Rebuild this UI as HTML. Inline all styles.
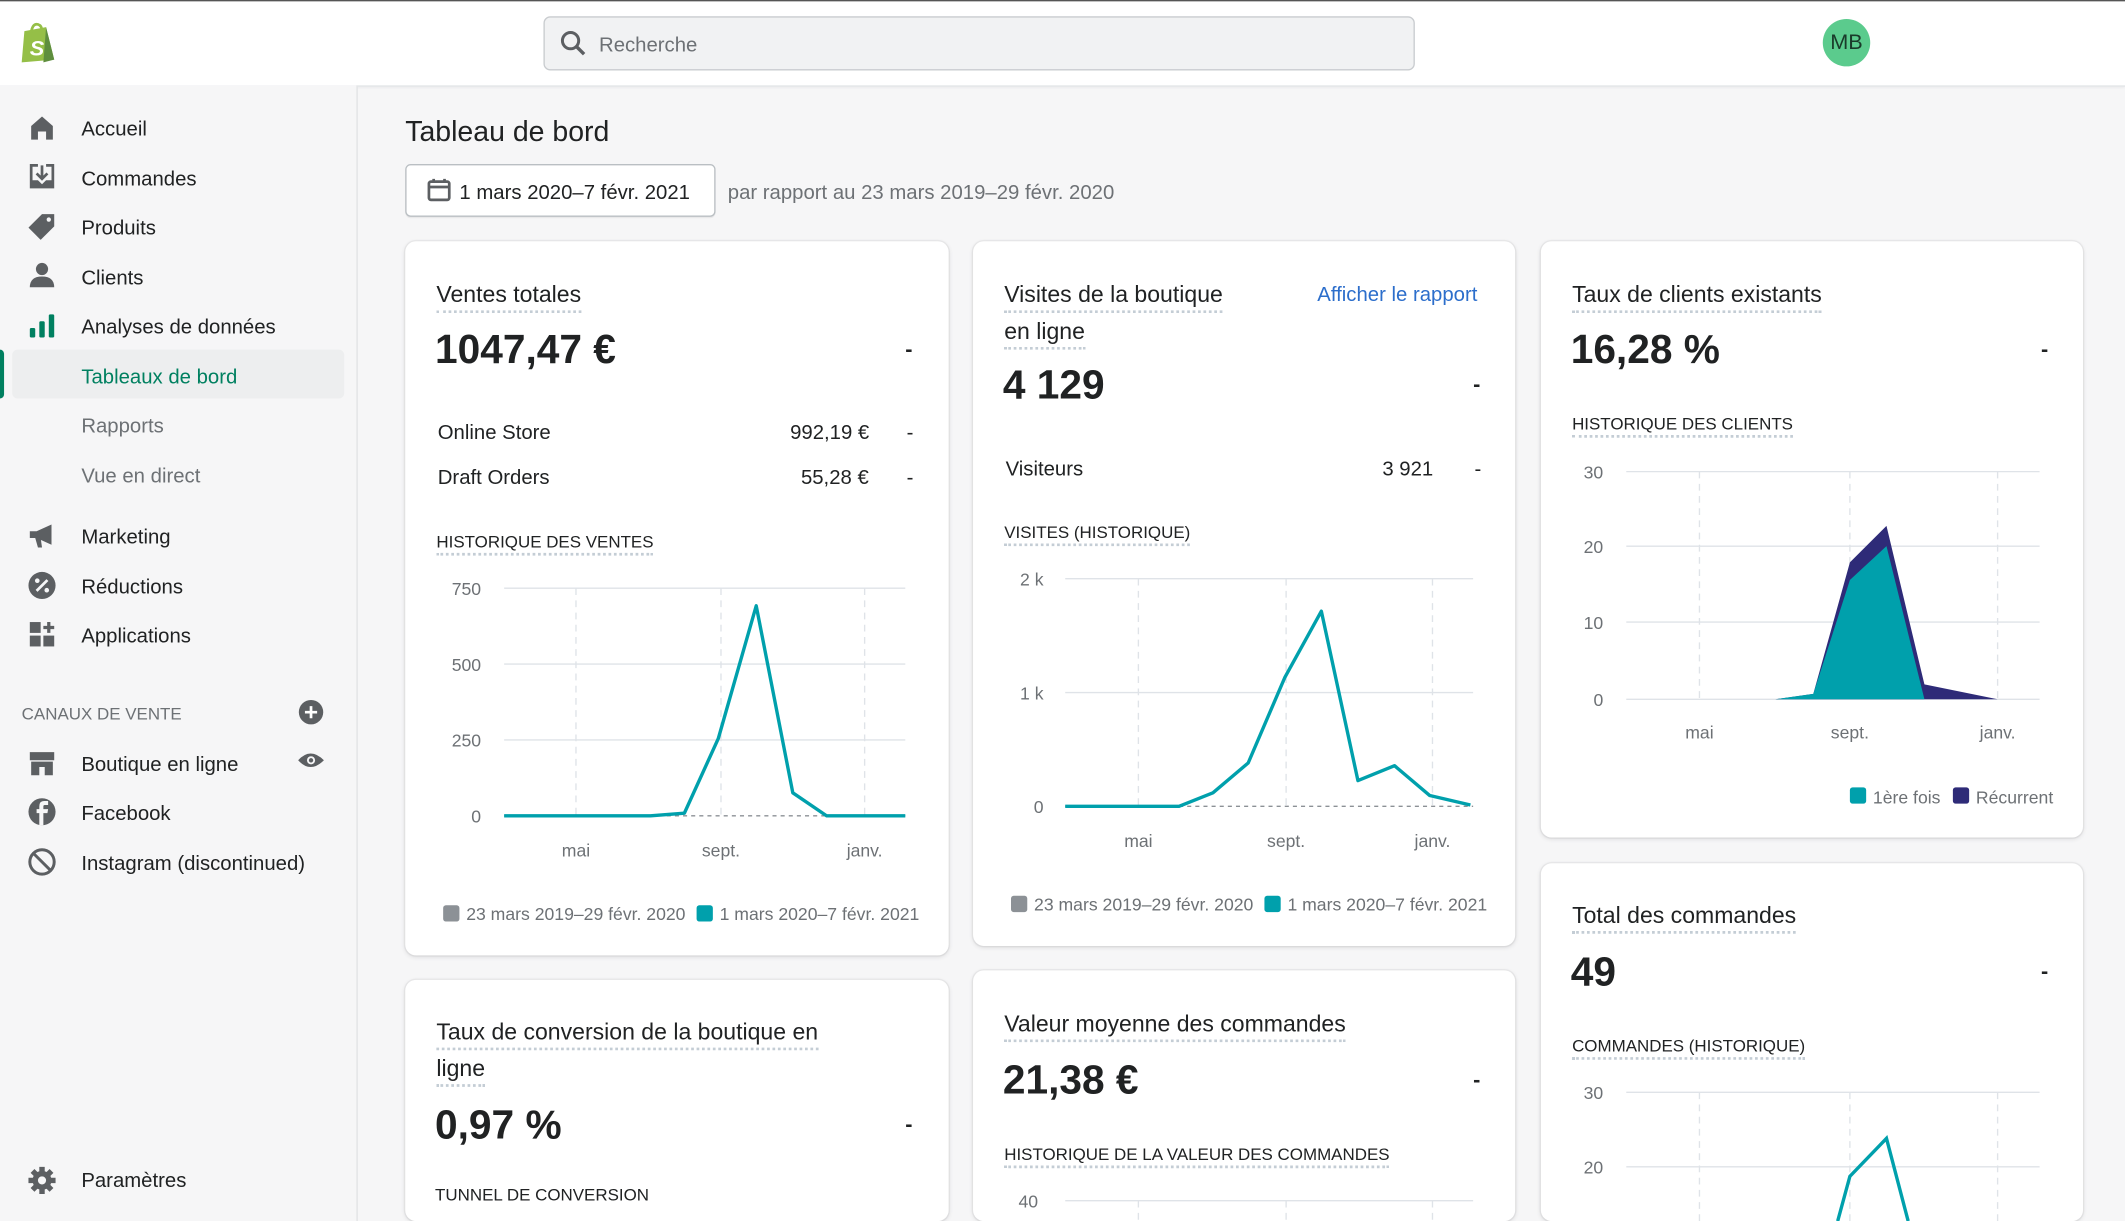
<!DOCTYPE html>
<html><head><meta charset="utf-8"><style>
html,body{margin:0;padding:0;width:2125px;height:1221px;overflow:hidden;background:#f6f6f7}
#w{position:absolute;left:0;top:0;width:1568px;height:901px;transform:scale(1.35523);transform-origin:0 0;background:#f6f6f7;font-family:"Liberation Sans",sans-serif;color:#202223;overflow:hidden}
.a{position:absolute;white-space:nowrap}
.nav,.sub,.ct,.big,.row,.dash,.cap,.t2{margin-top:2px}
.top{position:absolute;left:0;top:0;width:1568px;height:62px;background:#fff;border-top:1px solid #555;border-bottom:1px solid #e1e3e5;box-shadow:0 1px 2px rgba(0,0,0,.06)}
.side{position:absolute;left:0;top:63px;width:263px;height:838px;border-right:1px solid #e1e3e5;background:#f6f6f7}
.nav{font-size:15px;color:#202223}
.sub{font-size:15px;color:#6d7175}
.card{position:absolute;background:#fff;border-radius:8px;box-shadow:0 0 0 1px rgba(63,63,68,.05),0 1px 3px rgba(63,63,68,.15)}
.ct{font-size:17px;border-bottom:2px dotted #c4cdd5;padding-bottom:1px}
.big{font-size:30px;color:#202223;font-weight:bold}
.cap{font-size:12.5px;border-bottom:2px dotted #c4cdd5;padding-bottom:1px;color:#202223}
.row{font-size:15px}
.dash{font-size:16px;font-weight:bold}
svg text{font-family:"Liberation Sans",sans-serif;font-size:13px;fill:#6d7175}
</style></head><body><div id="w">
<div class="top"></div>
<svg class="a" style="left:14px;top:15px" width="28" height="32" viewBox="0 0 28 32"><path d="M4 8 L20 5 L26 29 L2 31 Z" fill="#95bf47"/><path d="M20 5 L26 29 L18 31 Z" fill="#5e8e3e"/><path d="M9 9 Q10 2 14 3 Q17 4 17 8" stroke="#95bf47" stroke-width="2" fill="none"/><text x="8" y="26" style="font-size:16px;font-weight:bold;fill:#fff;font-style:italic">S</text></svg>
<div class="a" style="left:401px;top:12px;width:641px;height:38px;background:#f1f2f3;border:1px solid #c9cccf;border-radius:5px"></div>
<svg class="a" style="left:413px;top:22px" width="20" height="20"><circle cx="8" cy="8" r="6" stroke="#5c5f62" stroke-width="2.2" fill="none"/><path d="M12.5 12.5 L18 18" stroke="#5c5f62" stroke-width="2.5"/></svg>
<div class="a t2" style="left:442px;top:23px;font-size:15px;color:#6d7175">Recherche</div>
<div class="a" style="left:1345px;top:14px;width:35px;height:35px;border-radius:50%;background:#5bcb8d;color:#1a3a2a;font-size:16px;text-align:center;line-height:35px">MB</div>

<div class="side"></div>
<svg class="a" style="left:21px;top:84px" width="20" height="20"><path d="M2 9 L10 2 L18 9 V19 H13 V13 H7 V19 H2 Z" fill="#5c5f62"/></svg>
<svg class="a" style="left:21px;top:120px" width="20" height="20"><path d="M1 1 H7 V3 H3 V13 H7 L10 16 L13 13 H17 V3 H13 V1 H19 V19 H1 Z" fill="#5c5f62"/><path d="M10 2 V11 M6 8 L10 12 L14 8" stroke="#5c5f62" stroke-width="2" fill="none"/></svg>
<svg class="a" style="left:21px;top:157px" width="20" height="20"><path d="M10 1 H19 V10 L9 20 L0 11 Z" fill="#5c5f62"/><circle cx="15" cy="5" r="1.6" fill="#f6f6f7"/></svg>
<svg class="a" style="left:21px;top:193px" width="20" height="20"><circle cx="10" cy="5.5" r="4.5" fill="#5c5f62"/><path d="M1 19 Q1 11 10 11 Q19 11 19 19 Z" fill="#5c5f62"/></svg>
<svg class="a" style="left:21px;top:230px" width="20" height="20"><rect x="1" y="12" width="4" height="7" rx="1" fill="#008060"/><rect x="8" y="7" width="4" height="12" rx="1" fill="#008060"/><rect x="15" y="2" width="4" height="17" rx="1" fill="#008060"/></svg>
<svg class="a" style="left:21px;top:385px" width="20" height="20"><path d="M1 7 H6 L17 2 V17 L6 12 H1 Z" fill="#5c5f62"/><path d="M5 12 L7 19 H10 L9 12" fill="#5c5f62"/></svg>
<svg class="a" style="left:20px;top:421px" width="22" height="22"><circle cx="11" cy="11" r="10" fill="#5c5f62"/><path d="M7 15 L15 7" stroke="#f6f6f7" stroke-width="2"/><circle cx="7.5" cy="7.5" r="1.7" fill="#f6f6f7"/><circle cx="14.5" cy="14.5" r="1.7" fill="#f6f6f7"/></svg>
<svg class="a" style="left:21px;top:458px" width="20" height="20"><rect x="1" y="1" width="8" height="8" fill="#5c5f62"/><rect x="1" y="11" width="8" height="8" fill="#5c5f62"/><rect x="11" y="11" width="8" height="8" fill="#5c5f62"/><path d="M15 1 V9 M11 5 H19" stroke="#5c5f62" stroke-width="2.4"/></svg>
<svg class="a" style="left:21px;top:553px" width="20" height="20"><path d="M1 2 H19 L19 8 H1 Z" fill="#5c5f62"/><path d="M2 9 H18 V19 H12 V13 H8 V19 H2 Z" fill="#5c5f62"/></svg>
<svg class="a" style="left:20px;top:588px" width="22" height="22"><circle cx="11" cy="11" r="10" fill="#5c5f62"/><path d="M12 21 V12 H15 L15.5 9 H12 V7 Q12 6 13 6 H15.5 V3 H12.5 Q9 3 9 7 V9 H7 V12 H9 V21 Z" fill="#f6f6f7"/></svg>
<svg class="a" style="left:20px;top:625px" width="22" height="22"><circle cx="11" cy="11" r="9" stroke="#5c5f62" stroke-width="2.2" fill="none"/><path d="M4.5 4.5 L17.5 17.5" stroke="#5c5f62" stroke-width="2.2"/></svg>
<svg class="a" style="left:20px;top:860px" width="22" height="22"><circle cx="11" cy="11" r="7" fill="#5c5f62"/><g stroke="#5c5f62" stroke-width="4"><path d="M11 1 V21 M1 11 H21 M4 4 L18 18 M18 4 L4 18"/></g><circle cx="11" cy="11" r="3" fill="#f6f6f7"/></svg>
<svg class="a" style="left:220px;top:516px" width="19" height="19"><circle cx="9.5" cy="9.5" r="9" fill="#5c5f62"/><path d="M9.5 5 V14 M5 9.5 H14" stroke="#fff" stroke-width="2"/></svg>
<svg class="a" style="left:219px;top:553px" width="21" height="16"><path d="M1 8 Q10 -2 20 8 Q10 18 1 8 Z" fill="#5c5f62"/><circle cx="10.5" cy="8" r="3" fill="#f6f6f7"/><circle cx="10.5" cy="8" r="1.6" fill="#5c5f62"/></svg>

<div class="a nav" style="left:60px;top:85px">Accueil</div>
<div class="a nav" style="left:60px;top:122px">Commandes</div>
<div class="a nav" style="left:60px;top:158px">Produits</div>
<div class="a nav" style="left:60px;top:195px">Clients</div>
<div class="a nav" style="left:60px;top:231px">Analyses de données</div>
<div class="a" style="left:9px;top:258px;width:245px;height:36px;background:#edeeef;border-radius:4px"></div>
<div class="a" style="left:0;top:258px;width:3px;height:36px;background:#008060;border-radius:0 3px 3px 0"></div>
<div class="a nav" style="left:60px;top:268px;color:#008060">Tableaux de bord</div>
<div class="a sub" style="left:60px;top:304px">Rapports</div>
<div class="a sub" style="left:60px;top:341px">Vue en direct</div>
<div class="a nav" style="left:60px;top:386px">Marketing</div>
<div class="a nav" style="left:60px;top:423px">Réductions</div>
<div class="a nav" style="left:60px;top:459px">Applications</div>
<div class="a t2" style="left:16px;top:518px;font-size:12.5px;color:#6d7175">CANAUX DE VENTE</div>
<div class="a nav" style="left:60px;top:554px">Boutique en ligne</div>
<div class="a nav" style="left:60px;top:590px">Facebook</div>
<div class="a nav" style="left:60px;top:627px">Instagram (discontinued)</div>
<div class="a nav" style="left:60px;top:861px">Paramètres</div>

<div class="a t2" style="left:299px;top:84px;font-size:21px">Tableau de bord</div>
<div class="a" style="left:299px;top:121px;width:227px;height:37px;background:#fff;border:1px solid #babfc3;border-radius:4px;box-shadow:0 1px 0 rgba(0,0,0,.05)"></div>
<svg class="a" style="left:315px;top:131px" width="18" height="18"><rect x="1.5" y="3" width="15" height="13.5" rx="1.5" stroke="#5c5f62" stroke-width="2" fill="none"/><path d="M1.5 7 H16.5" stroke="#5c5f62" stroke-width="2"/><path d="M5 1 V4 M13 1 V4" stroke="#5c5f62" stroke-width="2"/></svg>
<div class="a t2" style="left:339px;top:132px;font-size:15px">1 mars 2020–7 févr. 2021</div>
<div class="a t2" style="left:537px;top:132px;font-size:15px;color:#6d7175">par rapport au 23 mars 2019–29 févr. 2020</div>

<div class="card" style="left:299px;top:178px;width:401px;height:527px"></div>
<div class="a ct" style="left:322px;top:206px">Ventes totales</div>
<div class="a big" style="left:321px;top:240px">1047,47 €</div>
<div class="a dash" style="left:668px;top:248px">-</div>
<div class="a row" style="left:323px;top:309px">Online Store</div><div class="a row" style="left:583px;top:309px">992,19 €</div><div class="a row" style="left:669px;top:309px">-</div>
<div class="a row" style="left:323px;top:342px">Draft Orders</div><div class="a row" style="left:591px;top:342px">55,28 €</div><div class="a row" style="left:669px;top:342px">-</div>
<div class="a cap" style="left:322px;top:391px">HISTORIQUE DES VENTES</div>
<svg class="a" style="left:299px;top:420px" width="401" height="270" viewBox="299 420 401 270">
<g stroke="#dfe3e8" stroke-width="1"><path d="M372 434 H668 M372 490 H668 M372 546 H668"/></g>
<g stroke="#dfe3e8" stroke-dasharray="5 4"><path d="M425 434 V602 M532 434 V602 M638 434 V602"/></g>
<path d="M372 602 H668" stroke="#8c9196" stroke-dasharray="3 3"/>
<polyline points="372,602 480,602 505,600 530,545 558,447 585,585 610,602 668,602" stroke="#00a0ac" stroke-width="2.5" fill="none" stroke-linejoin="round"/>
<text x="355" y="439" text-anchor="end">750</text><text x="355" y="495" text-anchor="end">500</text><text x="355" y="551" text-anchor="end">250</text><text x="355" y="607" text-anchor="end">0</text>
<text x="425" y="632" text-anchor="middle">mai</text><text x="532" y="632" text-anchor="middle">sept.</text><text x="638" y="632" text-anchor="middle">janv.</text>
<rect x="327" y="668" width="12" height="12" rx="2" fill="#8c9196"/><text x="344" y="679">23 mars 2019–29 févr. 2020</text>
<rect x="514" y="668" width="12" height="12" rx="2" fill="#00a0ac"/><text x="531" y="679">1 mars 2020–7 févr. 2021</text>
</svg>

<div class="card" style="left:718px;top:178px;width:400px;height:520px"></div>
<div class="a ct" style="left:741px;top:206px">Visites de la boutique</div>
<div class="a ct" style="left:741px;top:233px">en ligne</div>
<div class="a t2" style="left:972px;top:207px;font-size:15px;color:#2c6ecb">Afficher le rapport</div>
<div class="a big" style="left:740px;top:266px">4 129</div>
<div class="a dash" style="left:1087px;top:274px">-</div>
<div class="a row" style="left:742px;top:336px">Visiteurs</div><div class="a row" style="left:1020px;top:336px">3 921</div><div class="a row" style="left:1088px;top:336px">-</div>
<div class="a cap" style="left:741px;top:384px">VISITES (HISTORIQUE)</div>
<svg class="a" style="left:718px;top:410px" width="400" height="275" viewBox="718 410 400 275">
<g stroke="#dfe3e8"><path d="M786 427 H1087 M786 511 H1087"/></g>
<g stroke="#dfe3e8" stroke-dasharray="5 4"><path d="M840 427 V595 M949 427 V595 M1057 427 V595"/></g>
<path d="M786 595 H1087" stroke="#8c9196" stroke-dasharray="3 3"/>
<polyline points="786,595 870,595 895,585 921,563 948,500 975,451 1002,576 1029,565 1055,587 1085,594" stroke="#00a0ac" stroke-width="2.5" fill="none" stroke-linejoin="round"/>
<text x="770" y="432" text-anchor="end">2 k</text><text x="770" y="516" text-anchor="end">1 k</text><text x="770" y="600" text-anchor="end">0</text>
<text x="840" y="625" text-anchor="middle">mai</text><text x="949" y="625" text-anchor="middle">sept.</text><text x="1057" y="625" text-anchor="middle">janv.</text>
<rect x="746" y="661" width="12" height="12" rx="2" fill="#8c9196"/><text x="763" y="672">23 mars 2019–29 févr. 2020</text>
<rect x="933" y="661" width="12" height="12" rx="2" fill="#00a0ac"/><text x="950" y="672">1 mars 2020–7 févr. 2021</text>
</svg>

<div class="card" style="left:1137px;top:178px;width:400px;height:440px"></div>
<div class="a ct" style="left:1160px;top:206px">Taux de clients existants</div>
<div class="a big" style="left:1159px;top:240px">16,28 %</div>
<div class="a dash" style="left:1506px;top:248px">-</div>
<div class="a cap" style="left:1160px;top:304px">HISTORIQUE DES CLIENTS</div>
<svg class="a" style="left:1137px;top:335px" width="400" height="270" viewBox="1137 335 400 270">
<g stroke="#dfe3e8"><path d="M1200 348 H1505 M1200 403 H1505 M1200 459 H1505 M1200 516 H1505"/></g>
<g stroke="#dfe3e8" stroke-dasharray="5 4"><path d="M1254 348 V516 M1365 348 V516 M1474 348 V516"/></g>
<polygon points="1310,516 1338,512 1365,415 1392,388 1420,505 1474,516" fill="#2e2b78"/>
<polygon points="1310,516 1338,512 1365,428 1392,403 1420,516" fill="#00a0ac"/>
<text x="1183" y="353" text-anchor="end">30</text><text x="1183" y="408" text-anchor="end">20</text><text x="1183" y="464" text-anchor="end">10</text><text x="1183" y="521" text-anchor="end">0</text>
<text x="1254" y="545" text-anchor="middle">mai</text><text x="1365" y="545" text-anchor="middle">sept.</text><text x="1474" y="545" text-anchor="middle">janv.</text>
<rect x="1365" y="581" width="12" height="12" rx="2" fill="#00a0ac"/><text x="1382" y="593">1ère fois</text>
<rect x="1441" y="581" width="12" height="12" rx="2" fill="#2e2b78"/><text x="1458" y="593">Récurrent</text>
</svg>

<div class="card" style="left:1137px;top:637px;width:400px;height:264px"></div>
<div class="a ct" style="left:1160px;top:664px">Total des commandes</div>
<div class="a big" style="left:1159px;top:699px">49</div>
<div class="a dash" style="left:1506px;top:707px">-</div>
<div class="a cap" style="left:1160px;top:763px">COMMANDES (HISTORIQUE)</div>
<svg class="a" style="left:1137px;top:790px" width="400" height="111" viewBox="1137 790 400 111">
<g stroke="#dfe3e8"><path d="M1200 806 H1505 M1200 861 H1505"/></g>
<g stroke="#dfe3e8" stroke-dasharray="5 4"><path d="M1254 806 V901 M1365 806 V901 M1474 806 V901"/></g>
<polyline points="1356,901 1365,868 1392,840 1408,901" stroke="#00a0ac" stroke-width="2.5" fill="none"/>
<text x="1183" y="811" text-anchor="end">30</text><text x="1183" y="866" text-anchor="end">20</text>
</svg>

<div class="card" style="left:299px;top:723px;width:401px;height:178px"></div>
<div class="a ct" style="left:322px;top:750px">Taux de conversion de la boutique en</div>
<div class="a ct" style="left:322px;top:777px">ligne</div>
<div class="a big" style="left:321px;top:812px">0,97 %</div>
<div class="a dash" style="left:668px;top:820px">-</div>
<div class="a t2" style="left:321px;top:873px;font-size:12.5px">TUNNEL DE CONVERSION</div>

<div class="card" style="left:718px;top:716px;width:400px;height:185px"></div>
<div class="a ct" style="left:741px;top:744px">Valeur moyenne des commandes</div>
<div class="a big" style="left:740px;top:779px">21,38 €</div>
<div class="a dash" style="left:1087px;top:787px">-</div>
<div class="a cap" style="left:741px;top:843px">HISTORIQUE DE LA VALEUR DES COMMANDES</div>
<svg class="a" style="left:718px;top:870px" width="400" height="31" viewBox="718 870 400 31">
<path d="M786 886 H1087" stroke="#dfe3e8"/>
<g stroke="#dfe3e8" stroke-dasharray="5 4"><path d="M840 886 V901 M949 886 V901 M1057 886 V901"/></g>
<text x="766" y="891" text-anchor="end">40</text>
</svg>
</div></body></html>
